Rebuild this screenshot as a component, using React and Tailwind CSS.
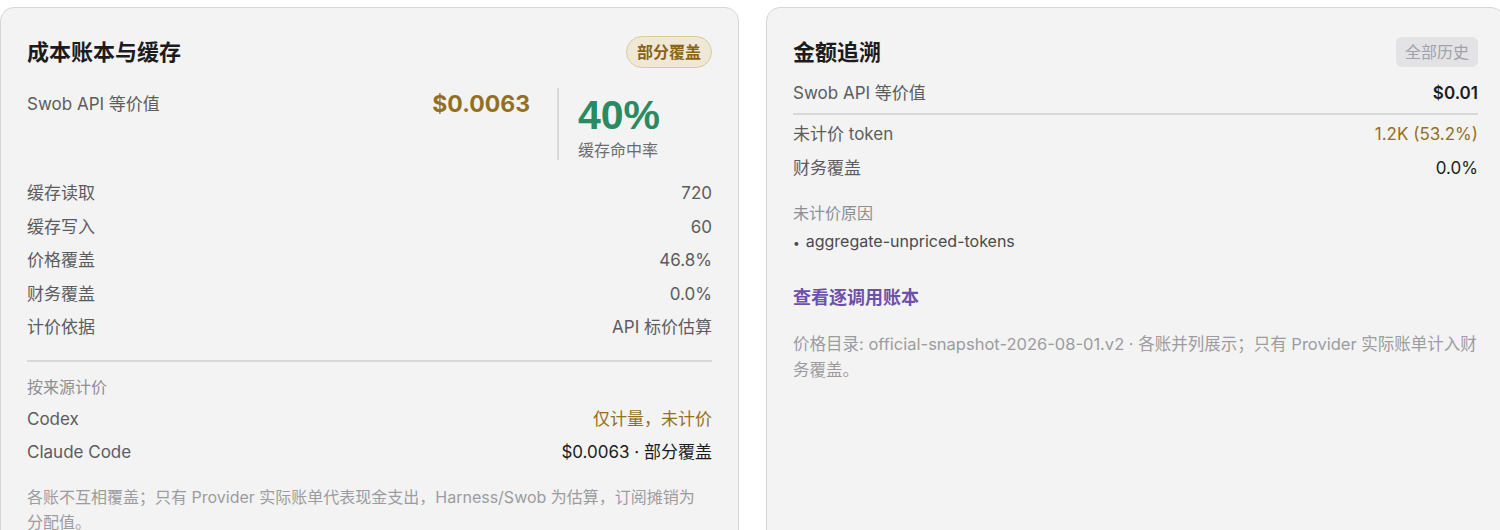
import React from "react";

const font = { fontFamily: '"Inter", "Noto Sans CJK SC", sans-serif' };

const costRows = [
  { label: "缓存读取", value: "720" },
  { label: "缓存写入", value: "60" },
  { label: "价格覆盖", value: "46.8%" },
  { label: "财务覆盖", value: "0.0%" },
  { label: "计价依据", value: "API 标价估算" },
];

const Row = ({ label, value, valueClass = "text-[#5c5c60]" }) => (
  <div className="flex items-center justify-between text-[17px] leading-6">
    <span className="text-[#5c5c60]">{label}</span>
    <span className={valueClass}>{value}</span>
  </div>
);

const CostCard = () => (
  <div className="rounded-[14px] border border-[#d6d6d6] bg-[#f3f3f3] px-[26px] pt-[28px]">
    <div className="flex h-8 items-center justify-between">
      <h2 className="text-[22px] font-bold text-[#1c1c1e]">成本账本与缓存</h2>
      <span className="flex h-8 items-center rounded-full border border-[#dcc9a0] bg-[#f0e8d6] px-[10px] text-[16px] font-bold text-[#8a6418]">
        部分覆盖
      </span>
    </div>

    <div className="mt-5 flex">
      <div className="flex flex-1 items-start justify-between pt-1">
        <span className="text-[17px] leading-6 text-[#5c5c60]">Swob API 等价值</span>
        <span className="text-[23px] font-bold leading-6 text-[#93701f]">$0.0063</span>
      </div>
      <div className="ml-[27px] h-[72px] w-[155px] border-l-2 border-[#dadada] pl-[19px] pt-[5px]">
        <div className="font-['Liberation_Sans'] text-[41px] font-bold leading-[44px] text-[#2a8a62]">40%</div>
        <div className="mt-[3px] text-[16px] leading-5 text-[#6c6c70]">缓存命中率</div>
      </div>
    </div>

    <div className="mt-[21px] flex flex-col gap-[9.5px]">
      {costRows.map((r) => (
        <Row key={r.label} label={r.label} value={r.value} />
      ))}
    </div>

    <div className="mt-[21px] border-t-2 border-[#d8d8d8]" />

    <div className="mt-[15px] text-[16px] leading-5 text-[#8e8e93]">按来源计价</div>
    <div className="mt-[10px] flex flex-col gap-[9px]">
      <Row label="Codex" value="仅计量，未计价" valueClass="text-[#93701f]" />
      <Row label="Claude Code" value="$0.0063 · 部分覆盖" valueClass="text-[#1c1c1e]" />
    </div>

    <p className="mt-[21px] pb-6 text-[16px] leading-[25px] text-[#9c9ca0]">
      各账不互相覆盖；只有 Provider 实际账单代表现金支出，Harness/Swob 为估算，订阅摊销为
      <br />
      分配值。
    </p>
  </div>
);

const TraceCard = () => (
  <div className="rounded-[14px] border border-[#d6d6d6] bg-[#f3f3f3] px-[26px] pt-[28px]">
    <div className="flex h-8 items-center justify-between">
      <h2 className="text-[22px] font-bold text-[#1c1c1e]">金额追溯</h2>
      <span className="flex h-[30px] items-center rounded-md bg-[#e3e3e6] px-[9px] text-[16px] text-[#a1a1a6]">
        全部历史
      </span>
    </div>

    <div className="mt-[13px] border-b-2 border-[#d8d8d8] pb-[8px]">
      <Row label="Swob API 等价值" value="$0.01" valueClass="font-semibold text-[#1c1c1e]" />
    </div>
    <div className="mt-[7px] flex flex-col gap-[10px]">
      <Row label="未计价 token" value="1.2K (53.2%)" valueClass="text-[#93701f]" />
      <Row label="财务覆盖" value="0.0%" valueClass="text-[#1c1c1e]" />
    </div>

    <div className="mt-[22px] text-[16px] leading-[22px] text-[#8e8e93]">未计价原因</div>
    <ul className="mt-[6px] text-[16px] leading-[22px] text-[#4a4a4e]">
      <li>
        <span className="mr-[6px] text-[12px]">•</span>aggregate-unpriced-tokens
      </li>
    </ul>

    <a className="mt-[31px] block text-[18px] font-bold leading-[26px] text-[#6d50ac]">查看逐调用账本</a>

    <p className="mt-[20px] text-[16.5px] leading-[26px] text-[#9c9ca0]">
      价格目录: official-snapshot-2026-08-01.v2 · 各账并列展示；只有 Provider 实际账单计入财
      <br />
      务覆盖。
    </p>
  </div>
);

export default function App() {
  return (
    <div className="h-[530px] w-[1500px] overflow-hidden bg-white" style={font}>
      <div className="grid w-[1506px] grid-cols-[739px_739px] items-stretch gap-[27px] pt-[7px]">
        <CostCard />
        <TraceCard />
      </div>
    </div>
  );
}
